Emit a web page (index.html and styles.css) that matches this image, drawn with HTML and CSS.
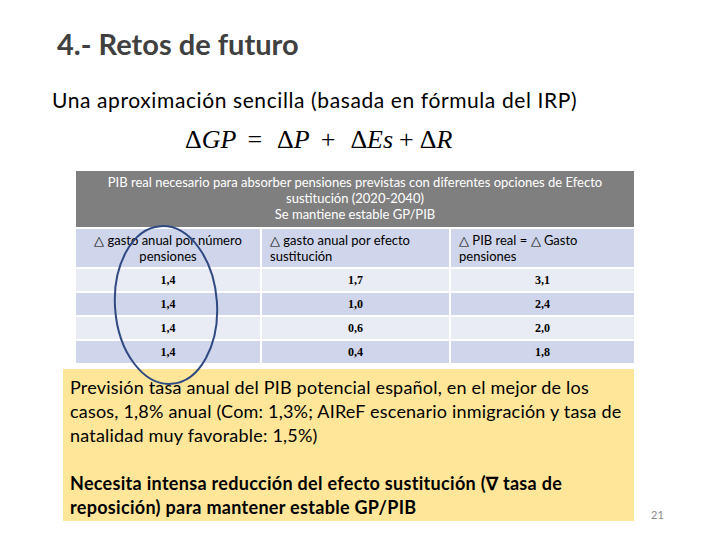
FILE: index.html
```html
<!DOCTYPE html>
<html lang="es">
<head>
<meta charset="utf-8">
<title>4.- Retos de futuro</title>
<link rel="stylesheet" href="styles.css">
</head>
<body>
<div class="slide">
  <h1 class="title">4.- Retos de futuro</h1>
  <p class="sub">Una aproximación sencilla (basada en fórmula del IRP)</p>
  <div class="formula"><span class="d">Δ</span><i>GP</i><span class="op">=</span><span class="d">Δ</span><i>P</i><span class="op">+</span><span class="d">Δ</span><i>Es</i><span class="op2">+</span><span class="d">Δ</span><i>R</i></div>

  <div class="table">
    <div class="cap">PIB real necesario para absorber pensiones previstas con diferentes opciones de Efecto sustitución (2020-2040)<br>Se mantiene estable GP/PIB</div>
    <div class="hd center">△ gasto anual por número pensiones</div>
    <div class="hd">△ gasto anual por efecto sustitución</div>
    <div class="hd">△ PIB real = △ Gasto pensiones</div>

    <div class="c light">1,4</div><div class="c light">1,7</div><div class="c light">3,1</div>
    <div class="c dark">1,4</div><div class="c dark">1,0</div><div class="c dark">2,4</div>
    <div class="c light">1,4</div><div class="c light">0,6</div><div class="c light">2,0</div>
    <div class="c dark">1,4</div><div class="c dark">0,4</div><div class="c dark">1,8</div>
  </div>

  <div class="note">
    <p class="plain">Previsión tasa anual del PIB potencial español, en el mejor de los casos, 1,8% anual (Com: 1,3%; AIReF escenario inmigración y tasa de natalidad muy favorable: 1,5%)</p>
    <p class="strong">Necesita intensa reducción del efecto sustitución (∇ tasa de reposición) para mantener estable GP/PIB</p>
  </div>

  <svg class="ring" width="720" height="540" viewBox="0 0 720 540" aria-hidden="true">
    <ellipse cx="166" cy="305" rx="51" ry="79" transform="rotate(-4 166 305)" fill="none" stroke="#2f4a82" stroke-width="2"/>
  </svg>

  <div class="pagenum">21</div>
</div>
</body>
</html>
```

FILE: styles.css
```css
html, body {
  margin: 0;
  padding: 0;
  background: #fff;
}

.slide {
  position: relative;
  width: 720px;
  height: 540px;
  overflow: hidden;
  font-family: "Lato", "Liberation Sans", sans-serif;
  color: #000;
}

.title {
  margin: 0;
  padding: 27px 0 0 57px;
  font-size: 29px;
  line-height: 34px;
  font-weight: 700;
  color: #404040;
  letter-spacing: 0;
}

.sub {
  margin: 27px 0 0 52px;
  font-size: 21px;
  line-height: 24px;
  letter-spacing: 0.6px;
}

.formula {
  margin: 15px 0 0 185px;
  font-family: "Liberation Serif", serif;
  font-size: 26px;
  line-height: 26px;
  white-space: nowrap;
}

.formula i {
  font-style: italic;
}

.formula .op {
  margin: 0 15px 0 11px;
}

.formula .op2 {
  margin: 0 6px;
}

.table {
  margin: 18px 0 0 76px;
  width: 558px;
  display: grid;
  grid-template-columns: 184px 187px 183px;
  grid-template-rows: 56px 38px 22px 22px 22px 22px;
  gap: 2px;
  font-size: 13px;
  line-height: 16px;
}

.cap {
  grid-column: 1 / 4;
  background: #7f7f7f;
  color: #fff;
  text-align: center;
  padding: 3px 24px 0;
}

.hd {
  background: #cfd5ea;
  padding: 3px 6px 0 8px;
}

.hd.center {
  text-align: center;
  padding: 3px 4px 0;
}

.c {
  font-family: "Liberation Serif", serif;
  font-weight: 700;
  font-size: 12px;
  line-height: 22px;
  text-align: center;
}

.light {
  background: #e9ebf5;
}

.dark {
  background: #cfd5ea;
}

.note {
  margin: 6px 0 0 63px;
  width: 571px;
  height: 152px;
  box-sizing: border-box;
  background: #ffe699;
  padding: 6px 2px 0 7px;
  font-size: 18px;
  line-height: 24px;
}

.note p {
  margin: 0;
}

.note .plain {
  margin-bottom: 24px;
  letter-spacing: 0.2px;
}

.note .strong {
  font-weight: 700;
  letter-spacing: 0.3px;
}

.ring {
  position: absolute;
  left: 0;
  top: 0;
  pointer-events: none;
}

.pagenum {
  position: absolute;
  left: 651px;
  top: 508px;
  font-size: 11px;
  line-height: 14px;
  color: #8a8a8a;
}
```
